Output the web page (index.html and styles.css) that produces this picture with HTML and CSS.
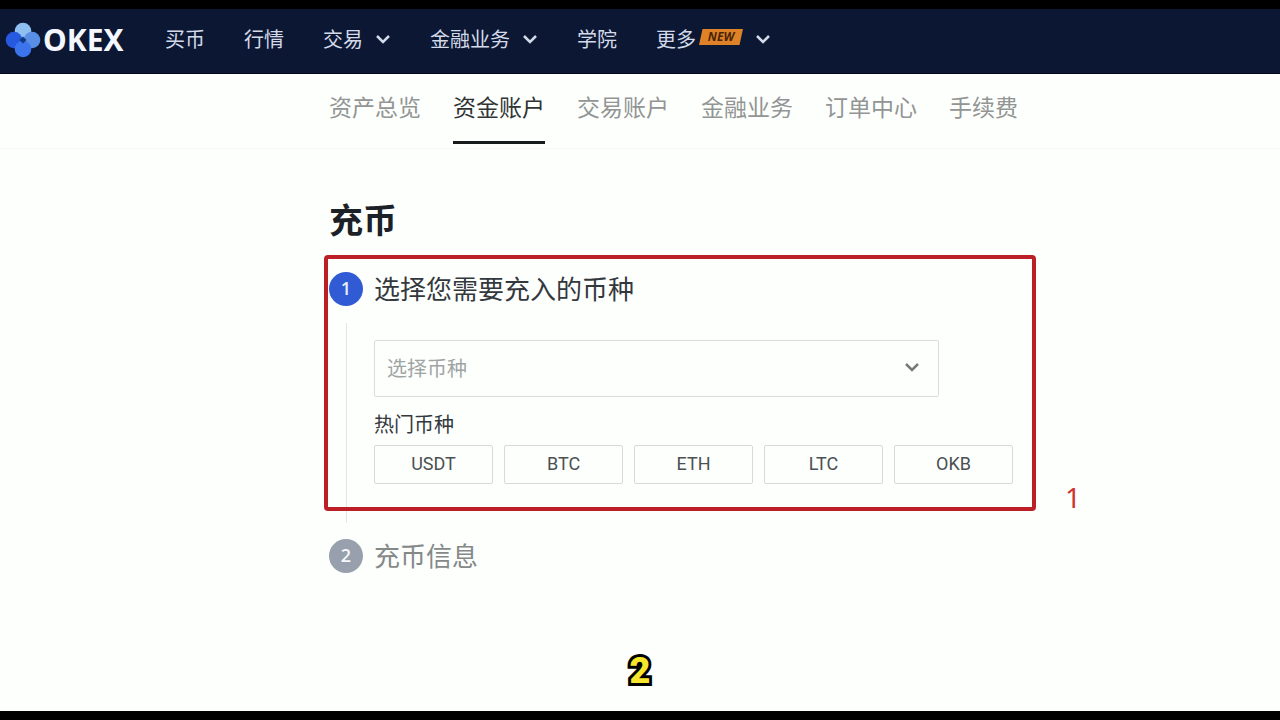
FILE: index.html
```html
<!DOCTYPE html>
<html lang="zh-CN">
<head>
<meta charset="utf-8">
<title>充币 - OKEX</title>
<link rel="stylesheet" href="styles.css">
</head>
<body>
<header class="topbar">
  <a class="logo" href="#">
    <svg class="logo-mark" viewBox="0 0 36 36" aria-hidden="true">
      <circle cx="18" cy="9" r="8.3" fill="#8fbef0"/>
      <circle cx="27" cy="18" r="8.3" fill="#5a8fe6"/>
      <circle cx="9" cy="18" r="8.3" fill="#2459e0"/>
      <circle cx="18" cy="27" r="8.3" fill="#3c74ee"/>
      <path d="M18 14.5 21.500 18 18 21.500 14.500 18Z" fill="#123a80"/>
    </svg>
    <span class="logo-name">OKEX</span>
  </a>
  <nav class="menu">
    <a class="menu-item" href="#">买币</a>
    <a class="menu-item" href="#">行情</a>
    <a class="menu-item" href="#">交易<svg class="chevron" viewBox="0 0 16 16" aria-hidden="true"><path d="m2 5 6 6 6-6"/></svg></a>
    <a class="menu-item" href="#">金融业务<svg class="chevron" viewBox="0 0 16 16" aria-hidden="true"><path d="m2 5 6 6 6-6"/></svg></a>
    <a class="menu-item" href="#">学院</a>
    <a class="menu-item" href="#">更多<span class="badge">NEW</span><svg class="chevron" viewBox="0 0 16 16" aria-hidden="true"><path d="m2 5 6 6 6-6"/></svg></a>
  </nav>
</header>
<nav class="tabs">
  <a class="tab" href="#">资产总览</a>
  <a class="tab tab-active" href="#">资金账户</a>
  <a class="tab" href="#">交易账户</a>
  <a class="tab" href="#">金融业务</a>
  <a class="tab" href="#">订单中心</a>
  <a class="tab" href="#">手续费</a>
</nav>
<main class="content">
  <h1 class="title">充币</h1>
  <section class="step">
    <div class="rail"><span class="dot">1</span><span class="line"></span></div>
    <div class="step-body">
      <h2 class="step-title">选择您需要充入的币种</h2>
      <div class="select-wrap">
        <select class="select" aria-label="选择币种"><option>选择币种</option></select>
        <svg class="chevron select-chevron" viewBox="0 0 16 16" aria-hidden="true"><path d="m2 5 6 6 6-6"/></svg>
      </div>
      <p class="hot-label">热门币种</p>
      <div class="coins">
        <button class="coin" type="button">USDT</button>
        <button class="coin" type="button">BTC</button>
        <button class="coin" type="button">ETH</button>
        <button class="coin" type="button">LTC</button>
        <button class="coin" type="button">OKB</button>
      </div>
    </div>
    <div class="highlight"><span class="highlight-number">1</span></div>
  </section>
  <section class="step step-pending">
    <div class="rail"><span class="dot">2</span></div>
    <h2 class="step-title">充币信息</h2>
  </section>
</main>
<p class="caption">2</p>
</body>
</html>
```
FILE: styles.css
```css
* { box-sizing: border-box; }

body {
  display: flex;
  flex-direction: column;
  min-height: 100vh;
  margin: 0;
  border-top: 9px solid #000;
  border-bottom: 9px solid #000;
  background: #fdfffd;
  color: #33383d;
  font-family: "Noto Sans CJK SC", sans-serif;
}

a { color: inherit; text-decoration: none; }
h1, h2, p { margin: 0; }

.topbar {
  display: flex;
  align-items: center;
  height: 65px;
  padding: 0 5px 2px;
  border-bottom: 1px solid #02081a;
  background: #0c1833;
  color: #d3daea;
}

.logo { display: flex; align-items: center; gap: 2px; width: 160px; }
.logo-mark { width: 36px; height: 36px; }
.logo-name {
  color: #f4f7ff;
  font: 700 30px/36px "Noto Sans", sans-serif;
}

.menu { display: flex; gap: 39px; }
.menu-item {
  display: flex;
  align-items: center;
  padding-bottom: 2px;
  font-size: 20px;
  line-height: 28px;
  font-weight: 400;
}

.chevron {
  width: 16px;
  height: 16px;
  margin-left: 12px;
  fill: none;
  stroke: currentColor;
  stroke-width: 2.5;
}

.badge {
  margin: 0 0 4px 3px;
  width: 44px;
  background: #df8126;
  clip-path: polygon(8% 0, 100% 0, 92% 100%, 0 100%);
  color: #4a2505;
  font: italic 700 12px/16px "Open Sans", sans-serif;
  text-align: center;
}

.tabs {
  display: flex;
  gap: 32px;
  height: 75px;
  padding-left: 329px;
  border-bottom: 1px solid #f5f8f5;
}

.tab {
  height: 70px;
  color: #929594;
  font-size: 23px;
  line-height: 64px;
  font-weight: 400;
}

.tab-active { border-bottom: 3px solid #181b1b; color: #303434; }

.content { width: 684px; margin-left: 329px; padding-top: 46px; }

.title {
  margin-bottom: 29px;
  color: #1c2127;
  font-size: 34px;
  line-height: 48px;
  font-weight: 700;
}

.step { position: relative; display: flex; gap: 11px; }
.rail { display: flex; flex-direction: column; align-items: center; width: 34px; }

.dot {
  width: 34px;
  height: 34px;
  border-radius: 50%;
  background: #305bd5;
  color: #e8edfb;
  font: 600 18px/32px "Open Sans", sans-serif;
  text-align: center;
}

.line { width: 1px; height: 200px; margin: 17px 0 16px; background: #e3e8e3; }
.step-body { flex: 1; }
.step-title { font-size: 26px; line-height: 32px; font-weight: 400; }

.select-wrap { position: relative; width: 565px; margin-top: 36px; }
.select {
  display: block;
  width: 100%;
  height: 57px;
  padding: 0 12px 2px;
  appearance: none;
  border: 1px solid #d8dfd8;
  border-radius: 2px;
  background: transparent;
  color: #9fa5a5;
  font: 400 20px/28px "Noto Sans CJK SC", sans-serif;
}
.select-chevron { position: absolute; top: 19px; right: 19px; color: #747b79; }

.hot-label { margin: 13px 0 7px; font-size: 20px; line-height: 28px; font-weight: 400; }

.coins { display: grid; grid-template-columns: repeat(5, 1fr); gap: 11px; }
.coin {
  height: 39px;
  padding: 0 0 2px;
  border: 1px solid #d5dcd7;
  border-radius: 2px;
  background: transparent;
  color: #4b5052;
  font: 400 18px/24px Roboto, sans-serif;
}

.highlight {
  position: absolute;
  inset: -17px -23px 28px -5px;
  border: 4px solid #bd1f26;
  border-radius: 4px;
  pointer-events: none;
}
.highlight-number {
  position: absolute;
  right: -49px;
  bottom: -8px;
  color: #cf3530;
  font: 400 28px/36px "Noto Sans", sans-serif;
}

.step-pending { color: #858988; }
.step-pending .dot { background: #98a0ad; color: #f6f8fb; }

.caption {
  margin: auto 0 18px;
  color: #f7e62b;
  font: 900 36px/44px Roboto, sans-serif;
  text-align: center;
  -webkit-text-stroke: 6px #000;
  paint-order: stroke fill;
  stroke-linejoin: round;
}
```
